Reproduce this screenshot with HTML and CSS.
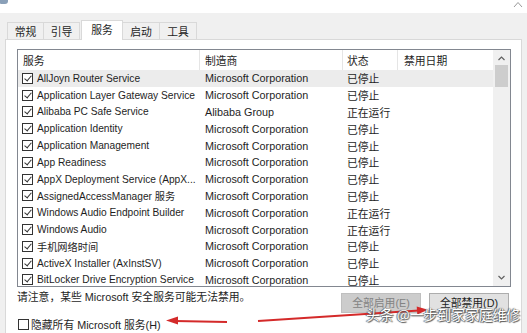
FILE: index.html
```html
<!DOCTYPE html>
<html lang="zh">
<head>
<meta charset="utf-8">
<title>系统配置</title>
<link rel="stylesheet" href="styles.css">
</head>
<body>
<div class="window">
  <div class="titlebar">
    <span class="app-icon"></span>
    <svg class="close" width="10" height="8" viewBox="0 0 10 8"><path d="M1 7 L5 2.5 L9 7" fill="none" stroke="#9a9a9a" stroke-width="1"/></svg>
  </div>
  <div class="tabs">
    <div class="tab t1">常规</div>
    <div class="tab t2">引导</div>
    <div class="tab sel">服务</div>
    <div class="tab t4">启动</div>
    <div class="tab t5">工具</div>
  </div>
  <div class="panel">
    <div class="list">
      <div class="table">
        <div class="head">
          <div class="hc c1">服务</div>
          <div class="hc c2">制造商</div>
          <div class="hc c3">状态</div>
          <div class="hc c4">禁用日期</div>
        </div>
        <div class="rows">
          <div class="row hl"><div class="cell c1"><span class="cb on"></span>AllJoyn Router Service</div><div class="cell c2">Microsoft Corporation</div><div class="cell c3">已停止</div><div class="cell c4"></div></div>
          <div class="row"><div class="cell c1"><span class="cb on"></span>Application Layer Gateway Service</div><div class="cell c2">Microsoft Corporation</div><div class="cell c3">已停止</div><div class="cell c4"></div></div>
          <div class="row"><div class="cell c1"><span class="cb on"></span>Alibaba PC Safe Service</div><div class="cell c2">Alibaba Group</div><div class="cell c3">正在运行</div><div class="cell c4"></div></div>
          <div class="row"><div class="cell c1"><span class="cb on"></span>Application Identity</div><div class="cell c2">Microsoft Corporation</div><div class="cell c3">已停止</div><div class="cell c4"></div></div>
          <div class="row"><div class="cell c1"><span class="cb on"></span>Application Management</div><div class="cell c2">Microsoft Corporation</div><div class="cell c3">已停止</div><div class="cell c4"></div></div>
          <div class="row"><div class="cell c1"><span class="cb on"></span>App Readiness</div><div class="cell c2">Microsoft Corporation</div><div class="cell c3">已停止</div><div class="cell c4"></div></div>
          <div class="row"><div class="cell c1"><span class="cb on"></span>AppX Deployment Service (AppX...</div><div class="cell c2">Microsoft Corporation</div><div class="cell c3">已停止</div><div class="cell c4"></div></div>
          <div class="row"><div class="cell c1"><span class="cb on"></span>AssignedAccessManager 服务</div><div class="cell c2">Microsoft Corporation</div><div class="cell c3">已停止</div><div class="cell c4"></div></div>
          <div class="row"><div class="cell c1"><span class="cb on"></span>Windows Audio Endpoint Builder</div><div class="cell c2">Microsoft Corporation</div><div class="cell c3">正在运行</div><div class="cell c4"></div></div>
          <div class="row"><div class="cell c1"><span class="cb on"></span>Windows Audio</div><div class="cell c2">Microsoft Corporation</div><div class="cell c3">正在运行</div><div class="cell c4"></div></div>
          <div class="row"><div class="cell c1"><span class="cb on"></span>手机网络时间</div><div class="cell c2">Microsoft Corporation</div><div class="cell c3">已停止</div><div class="cell c4"></div></div>
          <div class="row"><div class="cell c1"><span class="cb on"></span>ActiveX Installer (AxInstSV)</div><div class="cell c2">Microsoft Corporation</div><div class="cell c3">已停止</div><div class="cell c4"></div></div>
          <div class="row"><div class="cell c1"><span class="cb on"></span>BitLocker Drive Encryption Service</div><div class="cell c2">Microsoft Corporation</div><div class="cell c3">已停止</div><div class="cell c4"></div></div>
        </div>
      </div>
      <div class="scrollbar">
        <svg class="arrow" width="17" height="17" viewBox="0 0 17 17"><path d="M5.5 10 L8.5 7 L11.5 10" fill="none" stroke="#606060" stroke-width="1.2"/></svg>
        <div class="thumb"></div>
        <div class="track"></div>
        <svg class="arrow" width="17" height="17" viewBox="0 0 17 17"><path d="M5.5 7 L8.5 10 L11.5 7" fill="none" stroke="#606060" stroke-width="1.2"/></svg>
      </div>
    </div>
    <div class="footer">
      <div class="note">请注意，某些 Microsoft 安全服务可能无法禁用。</div>
      <div class="buttons">
        <div class="btn disabled">全部启用(E)</div>
        <div class="btn">全部禁用(D)</div>
      </div>
    </div>
    <div class="hide">
      <span class="cb"></span>隐藏所有 Microsoft 服务(H)
    </div>
  </div>
  <svg class="marks" width="527" height="333" viewBox="0 0 527 333">
    <line x1="175" y1="321" x2="227" y2="322" stroke="#d42a2a" stroke-width="2"/>
    <polygon points="166,320.5 178,316.5 178,324.5" fill="#d42a2a"/>
    <line x1="258" y1="321" x2="419" y2="310.5" stroke="#d42a2a" stroke-width="2"/>
    <polygon points="428,309.8 417.3,314.4 416.7,306.4" fill="#d42a2a"/>
  </svg>
  <div class="watermark">头条 @一步到家家庭维修</div>
</div>
</body>
</html>
```

FILE: styles.css
```css
* { box-sizing: border-box; }
html, body { margin: 0; padding: 0; }
body {
  width: 527px;
  height: 333px;
  overflow: hidden;
  background: #f0f0f0;
  font-family: "Liberation Sans", "Noto Sans CJK SC", sans-serif;
  font-size: 10.8px;
  color: #1e1e1e;
}
.window {
  position: relative;
  width: 527px;
  height: 333px;
  display: flex;
  flex-direction: column;
}
.titlebar {
  height: 13px;
  background: #ffffff;
  display: flex;
  justify-content: space-between;
  align-items: flex-start;
  padding-right: 4px;
}
.app-icon {
  width: 8px;
  height: 4px;
  background: #8aa0b8;
  border-radius: 0 0 3px 1px;
}
.tabs {
  height: 26px;
  display: flex;
  align-items: flex-end;
  padding-left: 7px;
  position: relative;
  z-index: 2;
}
.tab {
  height: 17px;
  width: 37px;
  border: 1px solid #d9d9d9;
  border-bottom: none;
  background: #f0f0f0;
  display: flex;
  align-items: center;
  justify-content: center;
  line-height: 14px;
  padding-top: 1px;
}
.t2 { margin-left: -1px; }
.tab.sel {
  height: 20px;
  width: 42px;
  margin-left: 1px;
  margin-bottom: -1px;
  background: #ffffff;
  padding-top: 0;
  padding-bottom: 1px;
}
.t4 { margin-left: -1px; width: 38px; }
.t5 { margin-left: -1px; width: 38px; }
.panel {
  flex: 1;
  margin: 0 5px 0 5px;
  background: #ffffff;
  border: 1px solid #d9d9d9;
  border-bottom: none;
  padding: 9px 0 0 11px;
  display: flex;
  flex-direction: column;
}
.list {
  width: 494px;
  height: 238px;
  border: 1px solid #828790;
  display: flex;
  overflow: hidden;
}
.table {
  flex: 1;
  overflow: hidden;
}
.head, .row {
  display: grid;
  grid-template-columns: 182px 143px 55px 1fr;
}
.head { height: 20px; }
.hc {
  display: flex;
  align-items: center;
  border-right: 1px solid #e5e5e5;
  padding-left: 5px;
}
.hc.c3 { padding-left: 4px; }
.hc.c4 { padding-left: 6px; border-right: none; }
.row { height: 16.8px; }
.row.hl { background: #ececec; }
.cell {
  display: flex;
  align-items: center;
  white-space: nowrap;
  overflow: hidden;
  padding-left: 5px;
}
.cell.c1 { padding-left: 4px; font-size: 10.2px; }
.cell.c3 { padding-left: 4px; }
.cb {
  width: 11px;
  height: 11px;
  border: 1px solid #333333;
  background: #ffffff;
  margin-right: 4px;
  flex: none;
  position: relative;
}
.cb.on::after {
  content: "";
  position: absolute;
  left: 3px;
  top: 0px;
  width: 3px;
  height: 6px;
  border-right: 1px solid #333;
  border-bottom: 1px solid #333;
  transform: rotate(40deg);
}
.scrollbar {
  width: 17px;
  background: #f0f0f0;
  display: flex;
  flex-direction: column;
  align-items: center;
}
.arrow { flex: none; }
.thumb {
  width: 13px;
  height: 22px;
  margin-top: -2px;
  background: #cdcdcd;
}
.track { flex: 1; }
.footer {
  width: 494px;
  display: flex;
  justify-content: space-between;
  align-items: flex-start;
  margin-top: 3px;
}
.note { line-height: 14px; }
.buttons {
  display: flex;
  gap: 8px;
  margin-top: 3px;
  margin-right: 2px;
}
.btn {
  width: 80px;
  height: 20px;
  border: 1px solid #adadad;
  background: #e1e1e1;
  display: flex;
  align-items: center;
  justify-content: center;
  padding-bottom: 2px;
}
.btn.disabled {
  background: #cccccc;
  border-color: #bfbfbf;
  color: #838383;
}
.hide {
  display: flex;
  align-items: center;
  margin-top: 4px;
  margin-left: 1px;
  height: 14px;
}
.hide .cb { margin-right: 2px; }
.marks {
  position: absolute;
  left: 0;
  top: 0;
  pointer-events: none;
}
.watermark {
  position: absolute;
  left: 366px;
  top: 305px;
  font-family: "Noto Sans CJK SC", sans-serif;
  font-size: 13.8px;
  line-height: 18px;
  color: #ffffff;
  text-shadow: 0 0 1px #444, 1px 1px 1px #555, -1px 0 1px #666;
  white-space: nowrap;
}
```
